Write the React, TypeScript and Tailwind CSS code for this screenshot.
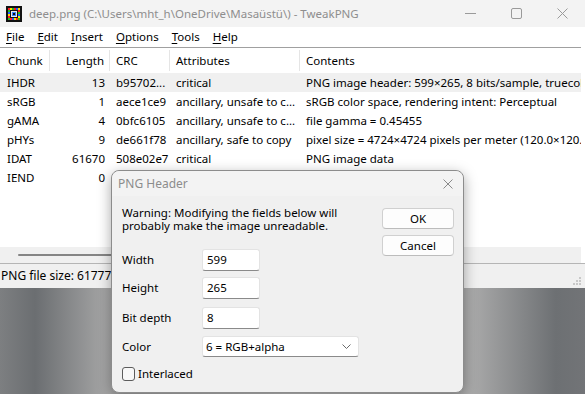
const rows = [
  { chunk: "IHDR", len: "13", crc: "b95702...", attr: "critical", contents: "PNG image header: 599×265, 8 bits/sample, truecolor+alpha, noninterlaced" },
  { chunk: "sRGB", len: "1", crc: "aece1ce9", attr: "ancillary, unsafe to c...", contents: "sRGB color space, rendering intent: Perceptual" },
  { chunk: "gAMA", len: "4", crc: "0bfc6105", attr: "ancillary, unsafe to c...", contents: "file gamma = 0.45455" },
  { chunk: "pHYs", len: "9", crc: "de661f78", attr: "ancillary, safe to copy", contents: "pixel size = 4724×4724 pixels per meter (120.0×120.0 dpi)" },
  { chunk: "IDAT", len: "61670", crc: "508e02e7", attr: "critical", contents: "PNG image data" },
  // the rest of this row sits under the dialog
  { chunk: "IEND", len: "0", crc: "", attr: "", contents: "" },
];

const menus = [
  ["F", "ile"],
  ["E", "dit"],
  ["I", "nsert"],
  ["O", "ptions"],
  ["T", "ools"],
  ["H", "elp"],
];

function AppIcon() {
  const px: [number, number, string][] = [
    [2, 2, "#ff2020"], [4, 2, "#ffe000"], [6, 2, "#20c020"], [8, 2, "#ff2020"], [10, 2, "#2060ff"], [12, 2, "#ffe000"],
    [2, 4, "#20c020"], [12, 4, "#ff2020"], [2, 6, "#2060ff"], [12, 6, "#20c020"],
    [2, 8, "#ffe000"], [12, 8, "#2060ff"], [2, 10, "#ff2020"], [12, 10, "#ffe000"],
    [2, 12, "#20c020"], [4, 12, "#ff2020"], [6, 12, "#2060ff"], [8, 12, "#ffe000"], [10, 12, "#ff2020"], [12, 12, "#20c020"],
  ];
  return (
    <svg width="16" height="16" viewBox="0 0 16 16">
      <rect x="0" y="0" width="16" height="16" fill="#111" />
      {px.map(([x, y, c], i) => (
        <rect key={i} x={x} y={y} width="2" height="2" fill={c} />
      ))}
      <rect x="5" y="5" width="6" height="6" fill="#e8e8e8" />
      <rect x="6" y="6" width="4" height="4" fill="#3a80ff" />
      <rect x="7" y="7" width="2" height="2" fill="#111" />
    </svg>
  );
}

function Field({ label, value, mt }: { label: string; value: string; mt: string }) {
  return (
    <div className={`flex items-center h-[22px] ${mt}`}>
      <span className="w-[80px]">{label}</span>
      <div className="w-[58px] h-[22px] bg-white border border-[#e3e3e3] border-b-[#8a8a8a] rounded-[3px] flex items-center pl-[4px]">
        {value}
      </div>
    </div>
  );
}

export default function App() {
  return (
    <div className="relative w-[585px] h-[394px] overflow-hidden font-['Noto_Sans',sans-serif] text-[11.5px] text-black bg-[linear-gradient(90deg,#7d7f81_0%,#6b6e71_6%,#a9a9a9_19%,#c2c2c2_50%,#acacac_80%,#6d7073_95%,#727477_100%)]">
      {/* main window */}
      <div className="flex flex-col h-[288px] w-[585px] bg-white">
        <div className="h-[27px] bg-[#f3f3f3] flex items-center shrink-0">
          <div className="ml-[6px] mr-[7px] flex items-center">
            <AppIcon />
          </div>
          <span className="text-[11.5px] text-[#8e8e8e] whitespace-nowrap">deep.png (C:\Users\mht_h\OneDrive\Masaüstü\) - TweakPNG</span>
          <div className="ml-auto flex items-center h-full">
            <div className="w-[46px] flex justify-center">
              <svg width="11" height="11" viewBox="0 0 11 11"><path d="M0 5.5h11" stroke="#9a9a9a" strokeWidth="1" /></svg>
            </div>
            <div className="w-[46px] flex justify-center">
              <svg width="11" height="11" viewBox="0 0 11 11"><rect x="0.5" y="0.5" width="10" height="10" rx="1.5" fill="none" stroke="#9a9a9a" /></svg>
            </div>
            <div className="w-[46px] flex justify-center">
              <svg width="11" height="11" viewBox="0 0 11 11"><path d="M0.5 0.5l10 10M10.5 0.5l-10 10" stroke="#9a9a9a" /></svg>
            </div>
          </div>
        </div>
        <div className="h-[20px] bg-white flex items-center shrink-0 text-[11.5px]">
          {menus.map(([u, rest], i) => (
            <span key={i} className="px-[6px] mr-[1px]">
              <span className="underline underline-offset-2">{u}</span>
              {rest}
            </span>
          ))}
        </div>
        <div className="flex-1 flex flex-col border-t border-[#a0a0a0] mr-[4px] bg-white min-h-0">
          <div className="h-[25px] flex items-center shrink-0">
            <div className="w-[50px] pl-[8px] border-r border-[#e5e5e5] h-[21px] flex items-center">Chunk</div>
            <div className="w-[60px] pr-[5px] border-r border-[#e5e5e5] h-[21px] flex items-center justify-end">Length</div>
            <div className="w-[60px] pl-[6px] border-r border-[#e5e5e5] h-[21px] flex items-center">CRC</div>
            <div className="w-[130px] pl-[6px] border-r border-[#e5e5e5] h-[21px] flex items-center">Attributes</div>
            <div className="flex-1 pl-[6px] h-[21px] flex items-center">Contents</div>
          </div>
          {rows.map((r, i) => (
            <div key={r.chunk} className={`h-[19px] flex items-center whitespace-nowrap shrink-0 ${i === 0 ? "bg-[#f0f0f0]" : ""}`}>
              <div className="w-[50px] pl-[7px]">{r.chunk}</div>
              <div className="w-[60px] pr-[5px] text-right">{r.len}</div>
              <div className="w-[60px] pl-[6px]">{r.crc}</div>
              <div className="w-[130px] pl-[6px] overflow-hidden">{r.attr}</div>
              <div className="flex-1 pl-[6px] overflow-hidden">{r.contents}</div>
            </div>
          ))}
          <div className="flex-1" />
          <div className="h-[16px] bg-[#f0f0f0] flex items-center shrink-0">
            <div className="ml-[18px] w-[290px] h-[2px] bg-[#858585] rounded-full" />
          </div>
        </div>
        <div className="h-[25px] shrink-0 bg-[#f0f0f0] border-t border-[#b5b5b5] flex items-center pl-[1px] pr-[4px]">
          <span className="text-[12px] w-[110px] overflow-hidden whitespace-nowrap">PNG file size: 61777 b</span>
          <svg className="ml-auto mt-[12px]" width="10" height="10" viewBox="0 0 10 10">
            {[[8, 0], [8, 3], [5, 3], [8, 6], [5, 6], [2, 6]].map(([x, y], i) => (
              <rect key={i} x={x} y={y} width="2" height="2" fill="#c8c8c8" />
            ))}
          </svg>
        </div>
      </div>

      {/* PNG Header dialog */}
      <div className="absolute left-[111px] top-[170px] w-[353px] h-[223px] bg-[#f0f0f0] border border-[#8c8c8c] rounded-[8px] shadow-[0_4px_14px_rgba(0,0,0,0.35)] flex flex-col">
        <div className="h-[25px] shrink-0 flex items-center pl-[6px] pr-[10px] bg-[#f3f3f3] rounded-t-[8px]">
          <span className="text-[12px] text-[#8c8c8c]">PNG Header</span>
          <svg className="ml-auto" width="10" height="10" viewBox="0 0 10 10"><path d="M0.5 0.5l9 9M9.5 0.5l-9 9" stroke="#8a8a8a" /></svg>
        </div>
        <div className="flex flex-1">
          <div className="w-[270px] pl-[10px] pt-[10px] flex flex-col">
            <p className="leading-[13px]">
              Warning: Modifying the fields below will
              <br />
              probably make the image unreadable.
            </p>
            <Field label="Width" value="599" mt="mt-[17px]" />
            <Field label="Height" value="265" mt="mt-[6px]" />
            <Field label="Bit depth" value="8" mt="mt-[8px]" />
            <div className="flex items-center h-[21px] mt-[7px]">
              <span className="w-[80px]">Color</span>
              <div className="w-[157px] h-[21px] bg-white border border-[#e3e3e3] border-b-[#8a8a8a] rounded-[3px] flex items-center pl-[3px] pr-[7px]">
                <span>6 = RGB+alpha</span>
                <svg className="ml-auto" width="9" height="5" viewBox="0 0 9 5"><path d="M0.5 0.5l4 4 4-4" fill="none" stroke="#6a6a6a" /></svg>
              </div>
            </div>
            <div className="flex items-center h-[16px] mt-[9px]">
              <div className="w-[13px] h-[14px] rounded-[3px] border border-[#5c5c5c] bg-[#f8f8f8]" />
              <span className="ml-[3px]">Interlaced</span>
            </div>
          </div>
          <div className="flex-1 pt-[12px] flex flex-col items-start">
            <button className="w-[72px] h-[21px] bg-[#fdfdfd] border border-[#d0d0d0] border-b-[#bcbcbc] rounded-[4px] flex items-center justify-center">OK</button>
            <button className="mt-[6px] w-[72px] h-[21px] bg-[#fdfdfd] border border-[#d0d0d0] border-b-[#bcbcbc] rounded-[4px] flex items-center justify-center">Cancel</button>
          </div>
        </div>
      </div>
    </div>
  );
}
